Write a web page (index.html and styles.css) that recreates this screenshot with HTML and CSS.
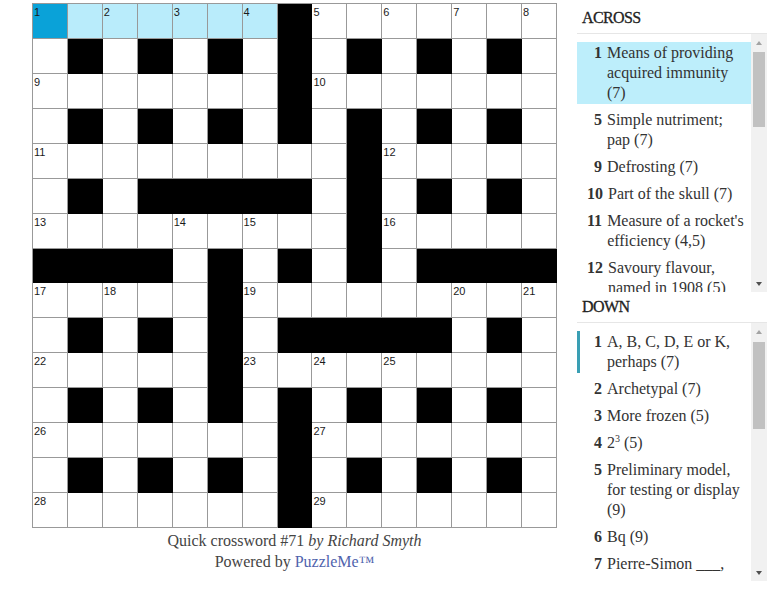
FILE: index.html
```html
<!DOCTYPE html>
<html lang="en">
<head>
<meta charset="utf-8">
<title>Quick crossword #71</title>
<link rel="stylesheet" href="styles.css">
</head>
<body>
<div class="page">
  <div class="board">
    <div class="grid" id="grid"></div>
    <div class="caption">
      <div>Quick crossword #71 <em>by Richard Smyth</em></div>
      <div>Powered by <a class="brand" href="#">PuzzleMe™</a></div>
    </div>
  </div>
  <div class="panel">
    <div class="heading">ACROSS</div>
    <div class="list-box">
      <div class="clues">
        <div class="clue selected"><span class="num">1</span><span class="txt">Means of providing acquired immunity (7)</span></div>
        <div class="clue"><span class="num">5</span><span class="txt">Simple nutriment; pap (7)</span></div>
        <div class="clue"><span class="num">9</span><span class="txt">Defrosting (7)</span></div>
        <div class="clue"><span class="num">10</span><span class="txt">Part of the skull (7)</span></div>
        <div class="clue"><span class="num">11</span><span class="txt">Measure of a rocket's efficiency (4,5)</span></div>
        <div class="clue"><span class="num">12</span><span class="txt">Savoury flavour, named in 1908 (5)</span></div>
      </div>
      <div class="scrollbar">
        <div class="btn"><span class="arrow-up"></span></div>
        <div class="thumb thumb-across"></div>
        <div class="fill"></div>
        <div class="btn"><span class="arrow-down"></span></div>
      </div>
    </div>
    <div class="heading">DOWN</div>
    <div class="list-box">
      <div class="clues">
        <div class="clue active"><span class="num">1</span><span class="txt">A, B, C, D, E or K, perhaps (7)</span></div>
        <div class="clue"><span class="num">2</span><span class="txt">Archetypal (7)</span></div>
        <div class="clue"><span class="num">3</span><span class="txt">More frozen (5)</span></div>
        <div class="clue"><span class="num">4</span><span class="txt">2<sup>3</sup> (5)</span></div>
        <div class="clue"><span class="num">5</span><span class="txt">Preliminary model, for testing or display (9)</span></div>
        <div class="clue"><span class="num">6</span><span class="txt">Bq (9)</span></div>
        <div class="clue"><span class="num">7</span><span class="txt">Pierre-Simon ___,</span></div>
      </div>
      <div class="scrollbar">
        <div class="btn"><span class="arrow-up"></span></div>
        <div class="thumb thumb-down"></div>
        <div class="fill"></div>
        <div class="btn"><span class="arrow-down"></span></div>
      </div>
    </div>
  </div>
</div>
<script src="grid.js"></script>
</body>
</html>
```
FILE: grid.js
```js
(function () {
  var rows = [
    ".......#.......",
    ".#.#.#.#.#.#.#.",
    ".......#.......",
    ".#.#.#.#.#.#.#.",
    ".........#.....",
    ".#.#####.#.#.#.",
    ".........#.....",
    "####.#.#.#.####",
    ".....#.........",
    ".#.#.#.#####.#.",
    ".....#.........",
    ".#.#.#.#.#.#.#.",
    ".......#.......",
    ".#.#.#.#.#.#.#.",
    ".......#......."
  ];
  function white(r, c) {
    return r >= 0 && r < 15 && c >= 0 && c < 15 && rows[r].charAt(c) === ".";
  }
  var grid = document.getElementById("grid");
  var n = 0;
  for (var r = 0; r < 15; r++) {
    for (var c = 0; c < 15; c++) {
      var d = document.createElement("div");
      var isWhite = white(r, c);
      d.className = "cell" + (isWhite ? "" : " black");
      if (r === 0 && c === 0) d.className += " current";
      else if (r === 0 && c > 0 && c < 7) d.className += " word";
      if (isWhite) {
        var across = !white(r, c - 1) && white(r, c + 1);
        var down = !white(r - 1, c) && white(r + 1, c);
        if (across || down) {
          n++;
          var s = document.createElement("span");
          s.className = "cnum";
          s.textContent = n;
          d.appendChild(s);
        }
      }
      grid.appendChild(d);
    }
  }
})();
```
FILE: styles.css
```css
html, body {
  margin: 0;
  padding: 0;
  background: #fff;
}
body {
  font-family: "Liberation Serif", "Times New Roman", serif;
  color: #333;
}
.page {
  display: flex;
  gap: 20px;
  padding: 3px 0 0 32px;
}
.board {
  display: flex;
  flex-direction: column;
  width: 525px;
}
.grid {
  display: grid;
  grid-template-columns: repeat(15, 1fr);
  grid-template-rows: repeat(15, 1fr);
  width: 525px;
  height: 525px;
  box-sizing: border-box;
  border-left: 1px solid #999;
  border-top: 1px solid #999;
}
.cell {
  box-sizing: border-box;
  border-right: 1px solid #999;
  border-bottom: 1px solid #999;
  background: #fff;
  padding: 3px 0 0 1px;
  font-family: "Liberation Sans", Arial, sans-serif;
  font-size: 11px;
  line-height: 11px;
  color: #1a1a1a;
}
.cell.black {
  background: #000;
  border-color: #000;
}
.cell.word {
  background: #b9ecfb;
}
.cell.current {
  background: #0aa2d8;
}
.caption {
  margin-top: 2px;
  text-align: center;
  font-size: 16px;
  line-height: 21px;
  color: #444;
}
.brand {
  color: #4f63ad;
  text-decoration: none;
}
.panel {
  width: 190px;
  display: flex;
  flex-direction: column;
  margin-top: -3px;
}
.heading {
  padding: 5px 5px 5px 5px;
  font-size: 16px;
  line-height: 20px;
  letter-spacing: -0.6px;
  color: #222;
  -webkit-text-stroke: 0.3px #222;
  border-bottom: 1px solid #e6e6e6;
}
.panel .heading:first-child {
  padding-top: 8px;
}
.list-box {
  display: flex;
  height: 258px;
}
.clues {
  flex: 1;
  overflow: hidden;
  padding-top: 8px;
}
.clue {
  display: flex;
  padding: 1px 5px 1px 10px;
  margin-bottom: 5px;
  font-size: 16px;
  line-height: 20px;
  color: #333;
}
.clue.selected {
  background: #bdeefb;
}
.clue.active {
  border-left: 3px solid #3a9fb4;
  padding-left: 7px;
}
.num {
  flex: 0 0 15px;
  text-align: right;
  font-weight: bold;
  margin-right: 5px;
}
.txt {
  flex: 1;
}
.txt sup {
  font-size: 10px;
  line-height: 0;
}
.scrollbar {
  width: 16px;
  background: #f1f1f1;
  display: flex;
  flex-direction: column;
}
.btn {
  height: 17px;
  display: flex;
  align-items: center;
  justify-content: center;
}
.arrow-up {
  width: 0;
  height: 0;
  border-left: 3.5px solid transparent;
  border-right: 3.5px solid transparent;
  border-bottom: 4px solid #a3a3a3;
}
.arrow-down {
  width: 0;
  height: 0;
  border-left: 3.5px solid transparent;
  border-right: 3.5px solid transparent;
  border-top: 4px solid #505050;
}
.thumb {
  margin: 1px 2px 0 2px;
  background: #c1c1c1;
}
.thumb-across {
  height: 75px;
}
.thumb-down {
  margin-top: 2px;
  height: 87px;
}
.fill {
  flex: 1;
}
```
